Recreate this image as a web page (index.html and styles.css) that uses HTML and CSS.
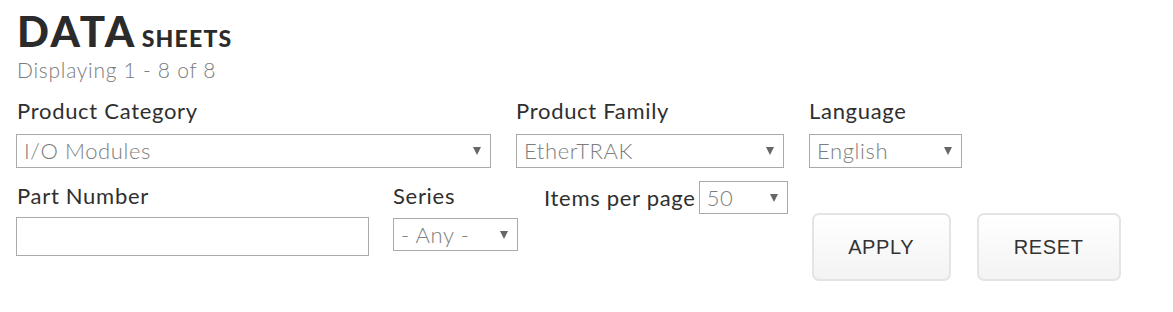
FILE: index.html
```html
<!DOCTYPE html>
<html lang="en">
<head>
<meta charset="utf-8">
<title>Data Sheets</title>
<link rel="stylesheet" href="styles.css">
</head>
<body>
<div class="page">
  <h1 class="title"><span class="title-main">DATA</span><span class="title-sub">SHEETS</span></h1>
  <div class="count">Displaying 1 - 8 of 8</div>

  <form class="filters">
    <div class="row row-1">
      <div class="field f-category">
        <label class="label">Product Category</label>
        <div class="select"><span class="select-value">I/O Modules</span><span class="arrow"></span></div>
      </div>
      <div class="field f-family">
        <label class="label">Product Family</label>
        <div class="select"><span class="select-value">EtherTRAK</span><span class="arrow"></span></div>
      </div>
      <div class="field f-language">
        <label class="label">Language</label>
        <div class="select"><span class="select-value">English</span><span class="arrow"></span></div>
      </div>
    </div>

    <div class="row row-2">
      <div class="field f-part">
        <label class="label">Part Number</label>
        <input class="text-input" type="text">
      </div>
      <div class="field f-series">
        <label class="label">Series</label>
        <div class="select select-sm"><span class="select-value">- Any -</span><span class="arrow"></span></div>
      </div>
      <div class="field f-items">
        <label class="label label-inline">Items per page</label>
        <div class="select select-sm select-items"><span class="select-value">50</span><span class="arrow"></span></div>
      </div>
      <div class="actions">
        <button type="button" class="btn btn-apply">APPLY</button>
        <button type="button" class="btn btn-reset">RESET</button>
      </div>
    </div>
  </form>
</div>
</body>
</html>
```

FILE: styles.css
```css
html, body {
  margin: 0;
  padding: 0;
  background: #ffffff;
}

body {
  font-family: Lato, "Open Sans", "Liberation Sans", sans-serif;
  color: #333333;
}

.page {
  padding: 11px 0 0 16px;
}

.title {
  margin: 0;
  line-height: 40px;
  height: 40px;
  color: #2b2b2b;
  font-weight: 900;
  white-space: nowrap;
}

.title-main {
  font-size: 42px;
  letter-spacing: 2.6px;
  margin-left: 1px;
}

.title-sub {
  margin-left: 5px;
  font-size: 23px;
  letter-spacing: 1.2px;
}

.count {
  margin-top: 7px;
  padding-left: 1px;
  font-size: 21px;
  font-weight: 300;
  line-height: 24px;
  letter-spacing: 0.72px;
  color: #7a7a7a;
}

.filters {
  margin: 16px 0 0 0;
}

.row {
  display: flex;
  align-items: flex-start;
}

.row-2 {
  margin-top: 15px;
}

.field {
  display: flex;
  flex-direction: column;
}

.label {
  display: block;
  font-size: 22px;
  line-height: 26px;
  letter-spacing: 0.7px;
  color: #2f2f2f;
  margin-bottom: 10px;
  white-space: nowrap;
}

.f-category .label,
.f-part .label { padding-left: 1px; }

.f-category { width: 475px; margin-right: 25px; }
.f-family   { width: 268px; margin-right: 25px; }
.f-language { width: 153px; }

.select {
  box-sizing: border-box;
  height: 34px;
  border: 1px solid #aaaaaa;
  background: #ffffff;
  display: flex;
  align-items: center;
  justify-content: space-between;
  padding: 0 9px 0 7px;
}

.select-value {
  font-size: 22px;
  font-weight: 300;
  color: #7d7d7d;
  line-height: 26px;
  letter-spacing: 0.6px;
  white-space: nowrap;
}

.arrow {
  flex: none;
  width: 0;
  height: 0;
  border-left: 4.5px solid transparent;
  border-right: 4.5px solid transparent;
  border-top: 8px solid #666666;
}

.f-part { width: 353px; margin-right: 24px; }
.f-part .label { margin-bottom: 8px; }

.text-input {
  box-sizing: border-box;
  width: 353px;
  height: 39px;
  border: 1px solid #aaaaaa;
  margin: 0;
  padding: 0 8px;
  font: inherit;
  outline: none;
}

.f-series { width: 125px; margin-right: 26px; }
.f-series .label { margin-bottom: 9px; }

.select-sm {
  height: 33px;
}

.f-items {
  flex-direction: row;
  align-items: center;
  margin-top: -2px;
  margin-right: 24px;
}

.label-inline {
  margin: 0 3px 0 0;
}

.select-items {
  width: 89px;
}

.actions {
  display: flex;
  margin-top: 30px;
}

.btn {
  box-sizing: border-box;
  height: 68px;
  padding: 0;
  margin: 0;
  border: 2px solid #e4e4e4;
  border-radius: 7px;
  background: linear-gradient(#ffffff, #f3f3f3);
  font-family: "Liberation Sans", Arial, sans-serif;
  font-size: 20px;
  letter-spacing: 0.6px;
  color: #333333;
  text-align: center;
  cursor: pointer;
}

.btn-apply { width: 139px; margin-right: 26px; }
.btn-reset { width: 144px; }
```
